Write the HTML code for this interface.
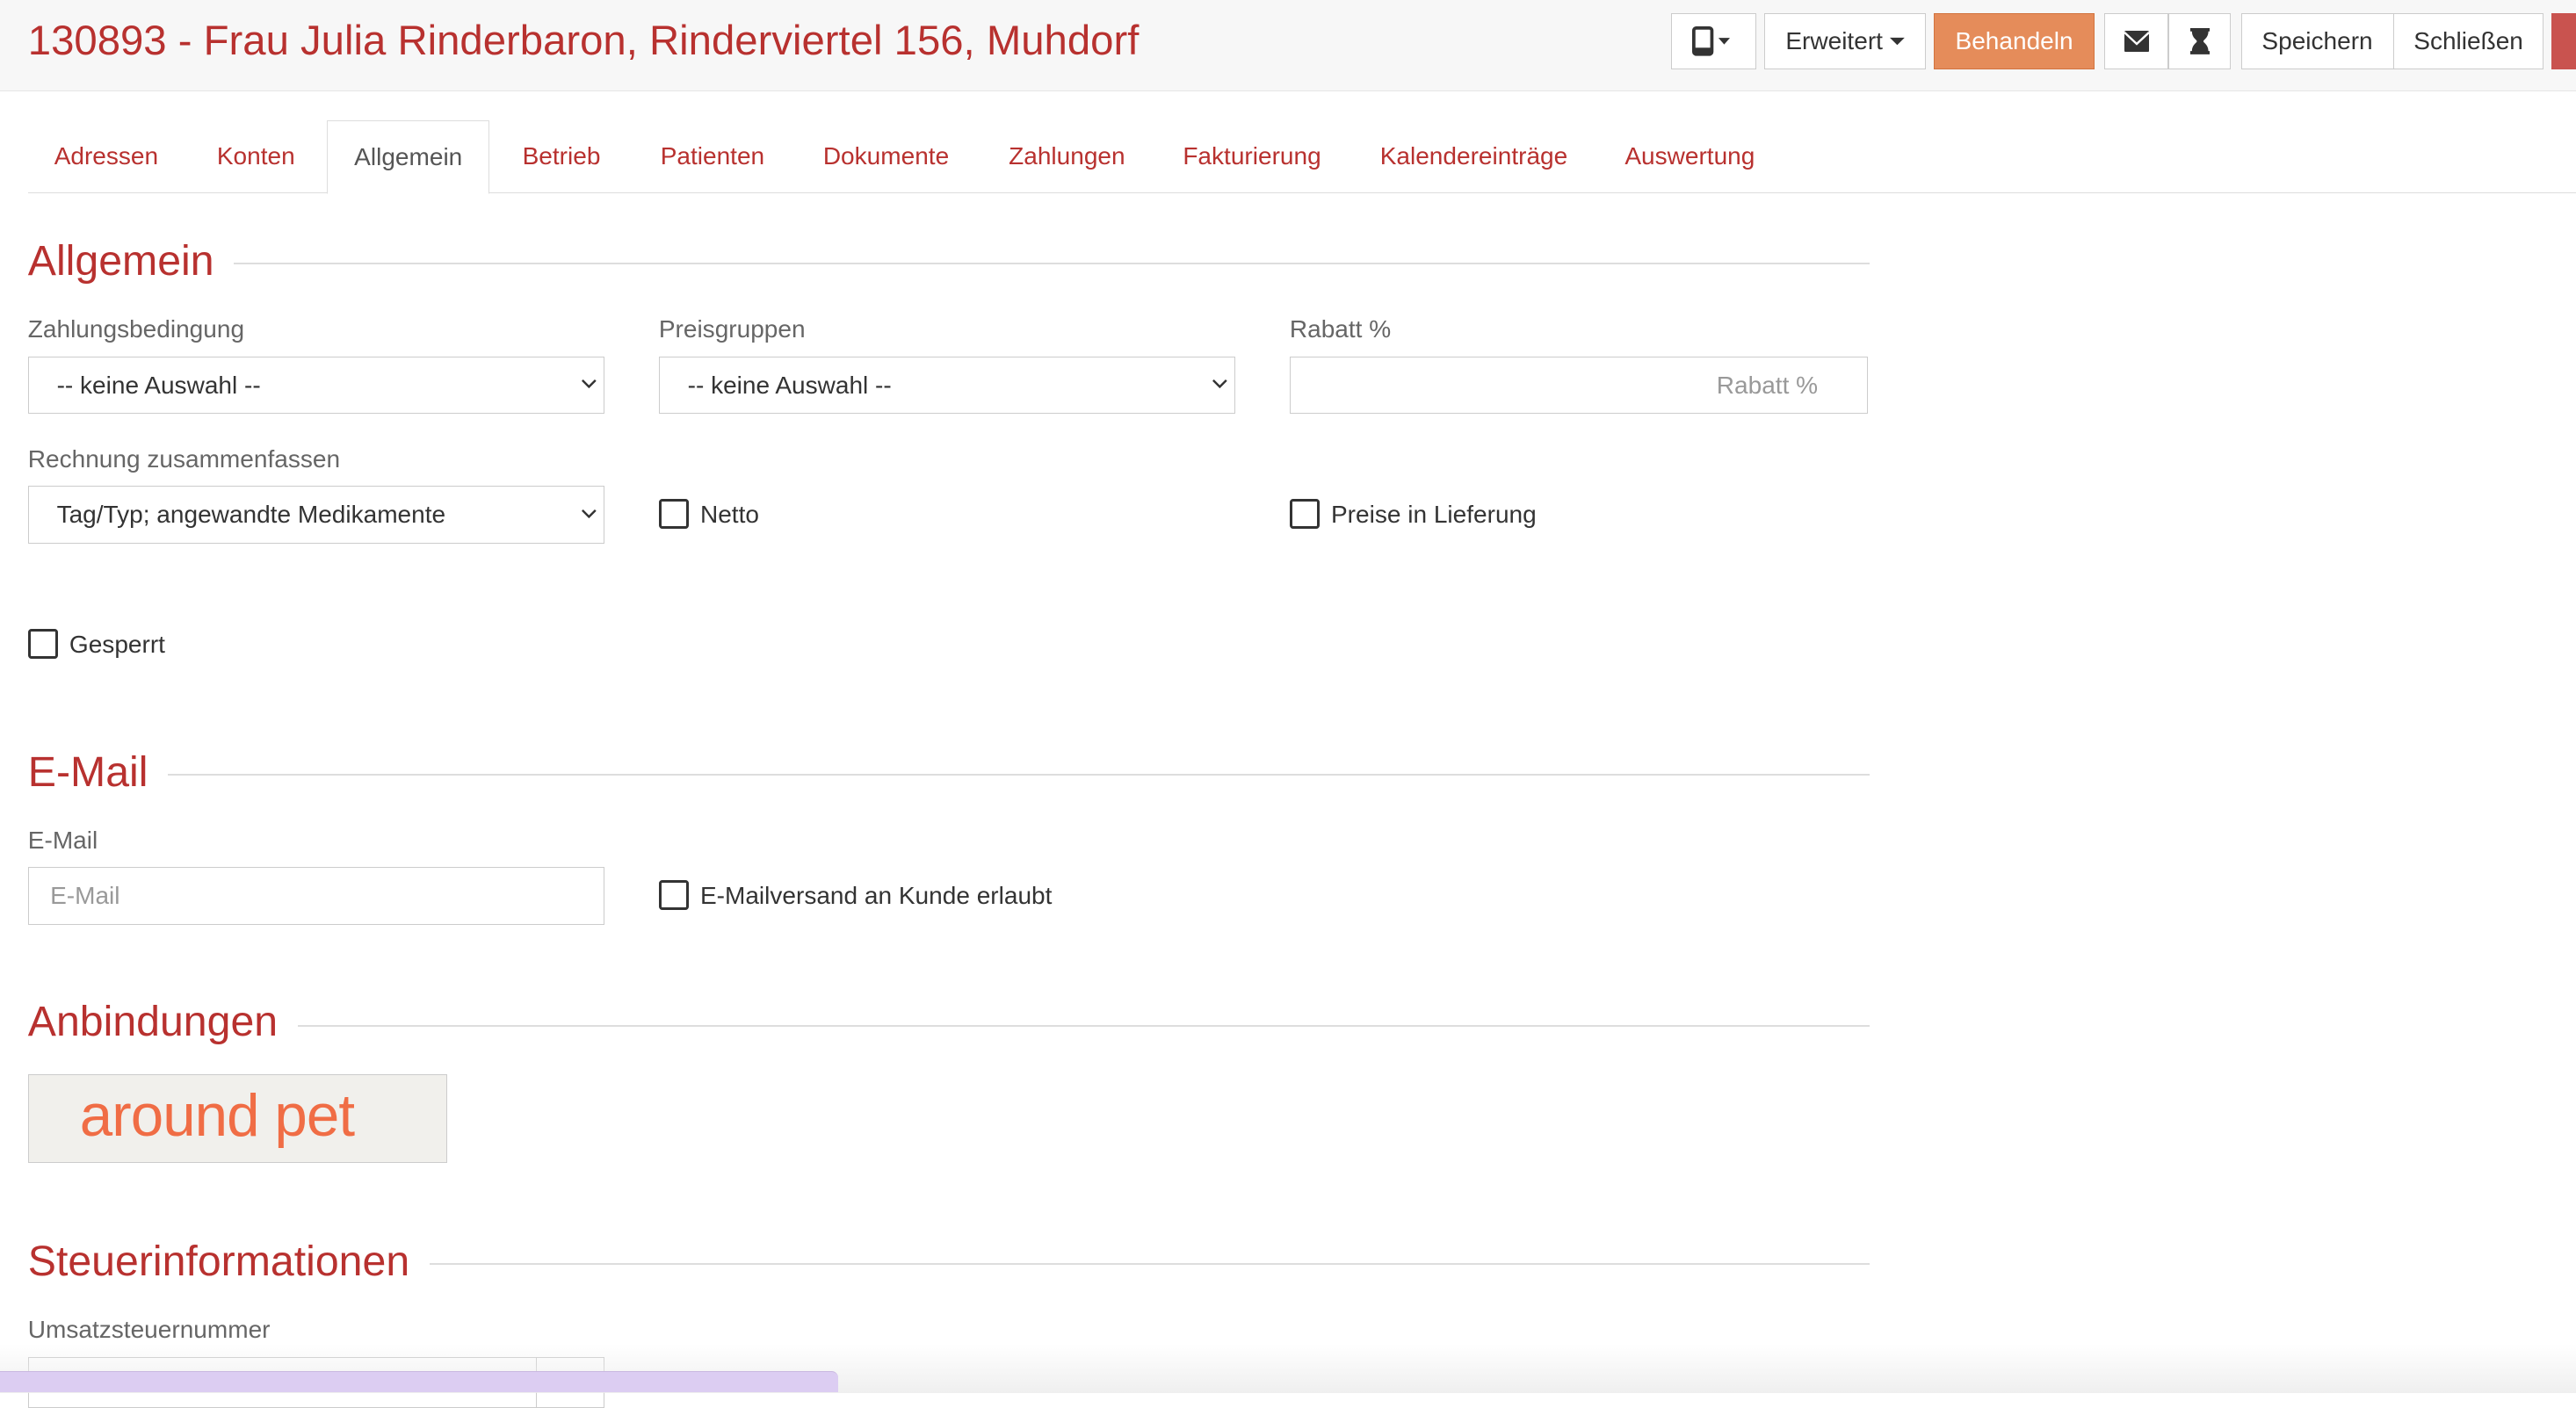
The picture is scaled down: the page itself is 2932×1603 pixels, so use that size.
<!DOCTYPE html>
<html><head><meta charset="utf-8"><style>
html{zoom:1.8699}
body{margin:0;width:1568px;height:841px;overflow:hidden;background:#fff;font-family:"Liberation Sans",sans-serif;position:relative;color:#333}
.hdr{position:absolute;left:0;top:0;width:1568px;height:55px;background:#f7f7f7;border-bottom:1px solid #e6e6e6}
.title{position:absolute;left:17px;top:10px;font-size:25.3px;color:#b8312f}
.btn{position:absolute;top:8px;height:33px;border:1px solid #ccc;background:#fff;box-sizing:content-box;font-size:15px;color:#333;display:flex;align-items:center;justify-content:center}
.tabs{position:absolute;left:17px;top:73px;width:1551px;height:44px;border-bottom:1px solid #ddd}
.tab{position:absolute;top:0;height:44px;line-height:44px;font-size:15px;color:#b8312f}
.tab.act{border:1px solid #ddd;border-bottom:1px solid #fff;background:#fff;color:#555;height:44px}
.h{position:absolute;left:17px;font-size:25.8px;color:#b8312f;background:#fff;padding-right:12px}
.line{position:absolute;left:17px;width:1121px;height:1px;background:#ddd}
.lbl{position:absolute;font-size:15px;color:#666}
.sel{position:absolute;height:34px;border:1px solid #ccc;background:#fff;font-size:15px;color:#333;line-height:34px;padding-left:17px;box-sizing:content-box}
.sel svg{position:absolute;right:4px;top:13px}
.cb{position:absolute;font-size:15px;color:#333;line-height:19px}
.cb i{display:inline-block;width:15px;height:15px;border:2px solid #333;border-radius:2px;vertical-align:top;margin-right:7px}
</style></head><body>
<div class="hdr">
<div class="title">130893 - Frau Julia Rinderbaron, Rinderviertel 156, Muhdorf</div>
<div class="btn" style="left:1017px;width:51px"><svg width="26" height="18" viewBox="0 0 26 18"><rect x="1" y="1" width="11" height="16" rx="1.5" fill="none" stroke="#333" stroke-width="2"/><rect x="1" y="13" width="11" height="4" fill="#333"/><path d="M16 7h7l-3.5 4z" fill="#333"/></svg></div>
<div class="btn" style="left:1074px;width:97px">Erweitert&nbsp;<svg width="9" height="6"><path d="M0 1h9l-4.5 4.5z" fill="#333"/></svg></div>
<div class="btn" style="left:1177px;width:97px;background:#e58c5a;border-color:#d2733f;color:#fff">Behandeln</div>
<div class="btn" style="left:1281px;width:38px"><svg width="15" height="13"><rect width="15" height="13" rx="1" fill="#333"/><path d="M0 1l7.5 7 7.5-7" fill="none" stroke="#fff" stroke-width="1.3"/></svg></div>
<div class="btn" style="left:1320px;width:37px"><svg width="12" height="16"><path d="M0 0h12v2h-1c0 4-3 5-3 6s3 2 3 6h1v2H0v-2h1c0-4 3-5 3-6S1 6 1 2H0z" fill="#333"/></svg></div>
<div class="btn" style="left:1364px;width:92px">Speichern</div>
<div class="btn" style="left:1457px;width:90px">Schließen</div>
<div class="btn" style="left:1553px;width:20px;background:#c9534f;border-color:#c9534f"></div>
</div>
<div class="tabs">
<div class="tab" style="left:16px">Adressen</div>
<div class="tab" style="left:115px">Konten</div>
<div class="tab act" style="left:182px;width:98px;text-align:center">Allgemein</div>
<div class="tab" style="left:301px">Betrieb</div>
<div class="tab" style="left:385px">Patienten</div>
<div class="tab" style="left:484px">Dokumente</div>
<div class="tab" style="left:597px">Zahlungen</div>
<div class="tab" style="left:703px">Fakturierung</div>
<div class="tab" style="left:823px">Kalendereinträge</div>
<div class="tab" style="left:972px">Auswertung</div>
</div>

<div class="line" style="top:160px"></div><div class="h" style="top:144px">Allgemein</div>
<div class="lbl" style="left:17px;top:192px">Zahlungsbedingung</div>
<div class="lbl" style="left:401px;top:192px">Preisgruppen</div>
<div class="lbl" style="left:785px;top:192px">Rabatt %</div>
<div class="sel" style="left:17px;top:217px;width:333px">-- keine Auswahl --<svg width="10" height="7"><path d="M1 1l4 4 4-4" fill="none" stroke="#333" stroke-width="1.3"/></svg></div>
<div class="sel" style="left:401px;top:217px;width:333px">-- keine Auswahl --<svg width="10" height="7"><path d="M1 1l4 4 4-4" fill="none" stroke="#333" stroke-width="1.3"/></svg></div>
<div class="sel" style="left:785px;top:217px;color:#999;text-align:right;padding-right:30px;width:304px;padding-left:17px">Rabatt %</div>
<div class="lbl" style="left:17px;top:271px">Rechnung zusammenfassen</div>
<div class="sel" style="left:17px;top:296px;width:333px">Tag/Typ; angewandte Medikamente<svg width="10" height="7"><path d="M1 1l4 4 4-4" fill="none" stroke="#333" stroke-width="1.3"/></svg></div>
<div class="cb" style="left:401px;top:304px"><i></i>Netto</div>
<div class="cb" style="left:785px;top:304px"><i></i>Preise in Lieferung</div>
<div class="cb" style="left:17px;top:383px"><i></i>Gesperrt</div>

<div class="line" style="top:471px"></div><div class="h" style="top:455px">E-Mail</div>
<div class="lbl" style="left:17px;top:503px">E-Mail</div>
<div class="sel" style="left:17px;top:528px;width:337px;padding-left:13px;color:#999">E-Mail</div>
<div class="cb" style="left:401px;top:536px"><i></i>E-Mailversand an Kunde erlaubt</div>

<div class="line" style="top:624px"></div><div class="h" style="top:607px">Anbindungen</div>
<div style="position:absolute;left:17px;top:654px;width:254px;height:53px;border:1px solid #ccc;background:#f1f0ec;color:#f06d45;font-size:36px;line-height:50px;box-sizing:content-box"><span style="position:absolute;left:31px;top:0;letter-spacing:-0.5px">around pet</span></div>

<div class="line" style="top:769px"></div><div class="h" style="top:753px">Steuerinformationen</div>
<div class="lbl" style="left:17px;top:801px">Umsatzsteuernummer</div>
<div style="position:absolute;left:17px;top:826px;width:309px;height:30px;border:1px solid #ccc"></div>
<div style="position:absolute;left:326px;top:826px;width:41px;height:30px;border:1px solid #ccc;background:#fff"></div>
<div style="position:absolute;left:0;top:818px;width:1568px;height:30px;background:linear-gradient(rgba(255,255,255,0),rgba(235,235,235,0.8))"></div>
<div style="position:absolute;left:0;top:835px;width:510px;height:12px;background:#dccdf2;border-radius:0 4px 0 0;border-top:1px solid #c9b8e0"></div>
</body></html>
